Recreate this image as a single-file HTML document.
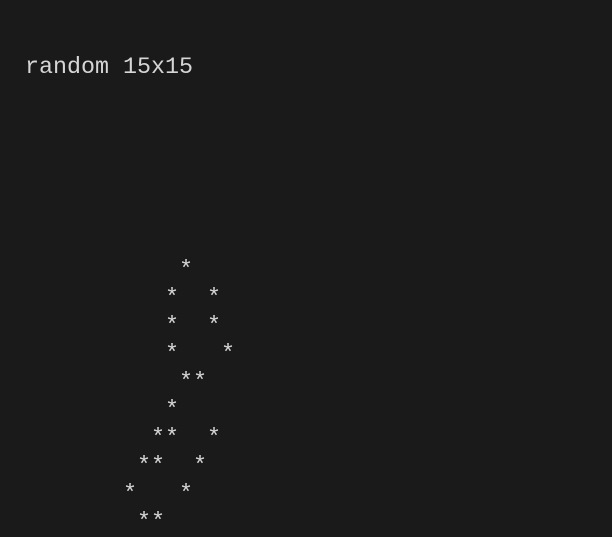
<!DOCTYPE html>
<html><head><meta charset="utf-8"><style>
html,body{margin:0;padding:0;background:#1a1a1a;width:612px;height:532px;overflow:hidden}
pre{position:absolute;left:25px;margin:0;font-family:"Liberation Mono",monospace;font-size:23.33px;line-height:28px;color:#d6d6d6}
</style></head><body>
<pre style="top:54px">random 15x15</pre>
<pre style="top:257px">           *
          *  *
          *  *
          *   *
           **
          *
         **  *
        **  *
       *   *
        **</pre>
</body></html>
